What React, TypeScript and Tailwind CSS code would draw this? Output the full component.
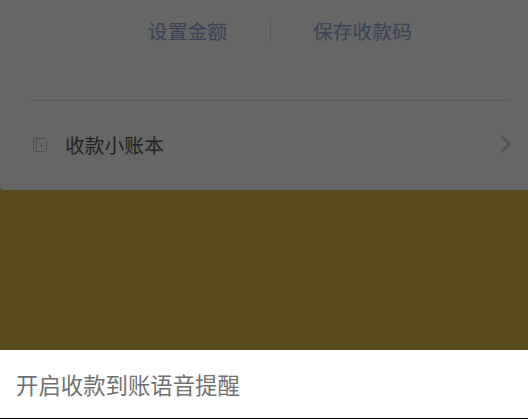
export default function App() {
  const cjk = { fontFamily: '"Noto Sans CJK SC", "Noto Sans", sans-serif' };
  return (
    <div className="w-[528px] h-[419px] flex flex-col overflow-hidden bg-[#5a491b]" style={cjk}>
      <div className="h-[190px] shrink-0 bg-[#666666] rounded-bl-[4px] flex flex-col">
        <div className="h-[62px] flex items-center">
          <div className="w-[270px] flex justify-end pr-[43px] shrink-0">
            <span className="text-[19.8px] leading-[28px] text-[#3a4259]">设置金额</span>
          </div>
          <div className="w-px h-6 bg-[#55575d] shrink-0" />
          <span className="ml-[42px] text-[19.8px] leading-[28px] text-[#3a4259]">保存收款码</span>
        </div>
        <div className="ml-[30px] mr-[17px] mt-[38px] h-px bg-[#5a5a5a]" />
        <div className="flex items-center ml-[33px] mr-[16px] h-[90px]">
          <svg width="14" height="14" viewBox="0 0 14 14" fill="none" stroke="#4f4f4f" strokeWidth="1" className="shrink-0 mb-px">
            <rect x="0.5" y="0.5" width="13" height="13" rx="1" />
            <path d="M3.5 0.5V13.5" />
            <path d="M7 4.5L8.5 6.5L10 4.5M8.5 6.5V10M7 7.5H10" strokeWidth="0.7" />
          </svg>
          <span className="ml-[18px] text-[19.8px] leading-[28px] text-[#222222]">收款小账本</span>
          <svg width="13" height="20" viewBox="0 0 13 20" fill="none" stroke="#555555" strokeWidth="2.8" className="ml-auto shrink-0 mb-[2px]">
            <path d="M2 1.5L10.5 10L2 18.5" />
          </svg>
        </div>
      </div>
      <div className="h-[160px] shrink-0 bg-[#5a491b]" />
      <div className="h-[68px] shrink-0 bg-white flex items-center pl-[16px]">
        <span className="text-[22.4px] leading-[32px] text-[#707070]">开启收款到账语音提醒</span>
      </div>
      <div className="h-px shrink-0 bg-black" />
    </div>
  );
}
